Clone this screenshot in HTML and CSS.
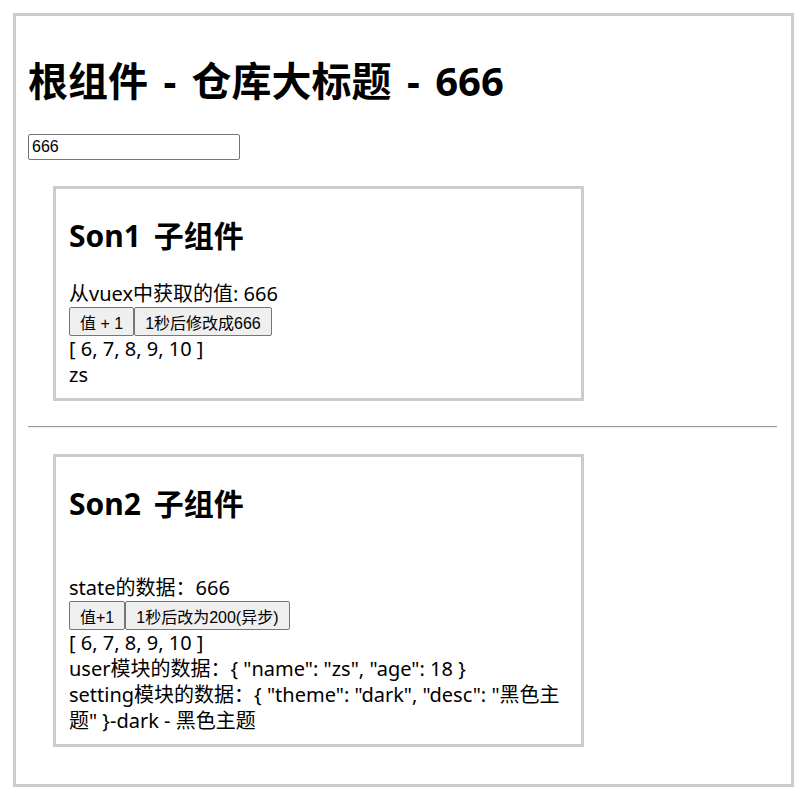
FILE: index.html
```html
<!DOCTYPE html>
<html lang="zh-CN">
<head>
<meta charset="utf-8">
<title>Vuex Demo</title>
<link rel="stylesheet" href="styles.css">
</head>
<body>
<div class="app">
  <h1 class="title">根组件 - 仓库大标题 - 666</h1>
  <input class="field" type="text" value="666">
  <div class="son">
    <h2 class="son-title">Son1 子组件</h2>
    <div class="line">从vuex中获取的值: 666</div>
    <div class="btns">
      <button class="btn">值 + 1</button><button class="btn">1秒后修改成666</button>
    </div>
    <div class="line">[ 6, 7, 8, 9, 10 ]</div>
    <div class="line">zs</div>
  </div>
  <hr class="divider">
  <div class="son">
    <h2 class="son-title">Son2 子组件</h2>
    <div class="line blank"></div>
    <div class="line">state的数据：666</div>
    <div class="btns">
      <button class="btn">值+1</button><button class="btn">1秒后改为200(异步)</button>
    </div>
    <div class="line">[ 6, 7, 8, 9, 10 ]</div>
    <div class="line">user模块的数据：{ "name": "zs", "age": 18 }</div>
    <div class="line">setting模块的数据：{ "theme": "dark", "desc": "黑色主<br>题" }-dark - 黑色主题</div>
  </div>
</div>
</body>
</html>
```
FILE: styles.css
```css
* { box-sizing: border-box; }
body {
  margin: 8px;
  font-family: "Noto Sans", "Noto Sans CJK SC", sans-serif;
  color: #000;
  background: #fff;
}
.app {
  width: 781px;
  margin: 5px;
  border: 3px solid #ccc;
  padding: 12px 14px 12px 12px;
}
.title {
  font-size: 40px;
  line-height: 53px;
  font-weight: 700;
  word-spacing: 5px;
  margin: 26px 0 27px;
}
.field {
  display: block;
  width: 212px;
  height: 26px;
  margin: 0;
  padding: 1px 3px;
  border: 1px solid #767676;
  border-radius: 2px;
  font-family: "Liberation Sans", Arial, sans-serif;
  font-size: 16px;
  color: #000;
}
.son {
  width: 531px;
  margin: 26px 0 25px 25px;
  border: 3px solid #ccc;
  padding: 2px 12px 10px 13px;
  font-size: 20px;
  line-height: 26px;
}
.son-title {
  font-size: 30px;
  line-height: 40px;
  font-weight: 700;
  word-spacing: 5px;
  margin: 25px 0;
}
.line { min-height: 26px; }
.btns {
  display: flex;
  height: 29px;
}
.btn {
  height: 29px;
  margin: 0;
  padding: 0 10px;
  border: 1px solid #767676;
  border-radius: 2px;
  background: #efefef;
  font-family: "Liberation Sans", "Noto Sans CJK SC", sans-serif;
  font-size: 16px;
  color: #000;
}
.divider {
  height: 0;
  margin: 0;
  border: none;
  border-top: 1px solid #9a9a9a;
  border-bottom: 1px solid #eeeeee;
}
.son + .divider + .son { margin-top: 26px; }
```
